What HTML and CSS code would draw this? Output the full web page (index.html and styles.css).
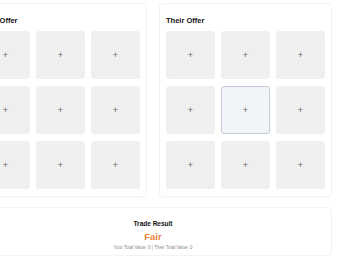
FILE: index.html
```html
<!DOCTYPE html>
<html lang="en">
<head>
<meta charset="UTF-8">
<meta name="viewport" content="width=device-width, initial-scale=1.0">
<title>Trade</title>
<link rel="stylesheet" href="styles.css">
</head>
<body>
<div class="page">
  <div class="offers">
    <section class="panel">
      <h2 class="panel-title">Your Offer</h2>
      <div class="grid">
        <div class="slot">+</div><div class="slot">+</div><div class="slot">+</div>
        <div class="slot">+</div><div class="slot">+</div><div class="slot">+</div>
        <div class="slot">+</div><div class="slot">+</div><div class="slot">+</div>
      </div>
    </section>
    <section class="panel">
      <h2 class="panel-title">Their Offer</h2>
      <div class="grid">
        <div class="slot">+</div><div class="slot">+</div><div class="slot">+</div>
        <div class="slot">+</div><div class="slot active">+</div><div class="slot">+</div>
        <div class="slot">+</div><div class="slot">+</div><div class="slot">+</div>
      </div>
    </section>
  </div>
  <section class="result">
    <h3 class="result-title">Trade Result</h3>
    <div class="verdict">Fair</div>
    <div class="totals">Your Total Value: 0 | Their Total Value: 0</div>
  </section>
</div>
</body>
</html>
```

FILE: styles.css
```css
html, body {
  margin: 0;
  background: #fff;
  overflow: hidden;
}
body {
  font-family: "Liberation Sans", Arial, sans-serif;
  color: #111;
}
.page {
  width: 358px;
  margin-left: -26px;
  padding-top: 3px;
}
.offers {
  display: grid;
  grid-template-columns: 173px 173px;
  gap: 12px;
}
.panel {
  box-sizing: border-box;
  background: #fff;
  border: 1px solid #f3f3f3;
  border-radius: 4px;
  box-shadow: 0 1px 1px rgba(0, 0, 0, 0.02);
  padding: 12px 6px 7px 6px;
}
.panel-title {
  margin: 0 0 5px 0;
  font-size: 7.5px;
  line-height: 10px;
  font-weight: 700;
}
.grid {
  display: grid;
  grid-template-columns: repeat(3, 1fr);
  grid-auto-rows: 48px;
  gap: 7px 6px;
}
.slot {
  box-sizing: border-box;
  background: #efefef;
  border: 1px solid #efefef;
  border-radius: 3px;
  display: flex;
  align-items: center;
  justify-content: center;
  font-size: 9px;
  color: #666;
}
.slot.active {
  background: #f1f4f9;
  border-color: #c3cad4;
}
.result {
  box-sizing: border-box;
  height: 49px;
  margin-top: 10px;
  border: 1px solid #f3f3f3;
  border-radius: 4px;
  box-shadow: 0 1px 1px rgba(0, 0, 0, 0.02);
  text-align: center;
  padding-top: 12px;
}
.result-title {
  margin: 0;
  font-size: 6.5px;
  line-height: 8px;
  font-weight: 700;
}
.verdict {
  margin-top: 3px;
  font-size: 9.5px;
  line-height: 12px;
  font-weight: 700;
  color: #e8833a;
}
.totals {
  margin-top: 2px;
  font-size: 4.5px;
  line-height: 6px;
  color: #888;
}
```
